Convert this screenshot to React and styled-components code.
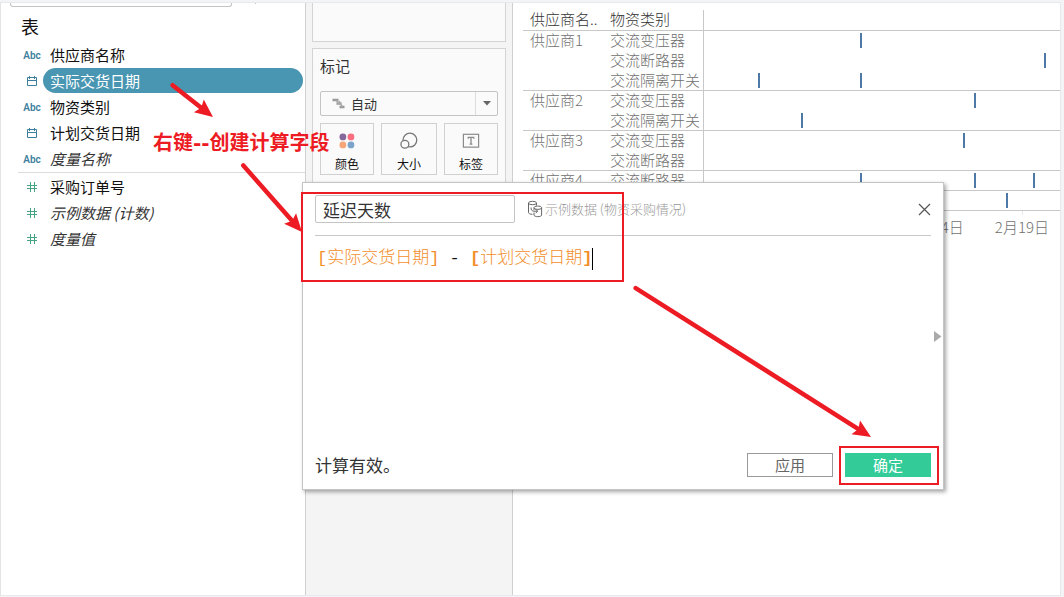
import React from "react";
import styled, { createGlobalStyle, ThemeProvider } from "styled-components";

const theme = {
  colors: {
    dimension: "#4996b2",
    dimensionIcon: "#3d7f9c",
    measure: "#45a583",
    line: "#c8c8c8",
    panel: "#f4f4f4",
    card: "#fafafa",
    mark: "#4e79a7",
    field: "#f28e2b",
    ok: "#33cc99",
    note: "#ed1c24",
  },
  ui: '"Open Sans", "Noto Sans CJK SC", sans-serif',
  cjk: '"Noto Sans CJK SC", sans-serif',
  mono: '"Liberation Mono", "Noto Sans CJK SC", monospace',
};

const GlobalStyle = createGlobalStyle`
  * {
    box-sizing: border-box;
  }
  body {
    margin: 0;
    background-color: #f3f4f6;
    font-family: ${theme.ui};
    color: #111;
  }
  button, input, select {
    font-family: inherit;
    margin: 0;
  }
`;

const Page = styled("div")`
  position: relative;
  min-height: 100vh;
  padding: 2px 3px 1px 0;
  display: flex;
  overflow: hidden;
`;

const Workspace = styled("div")`
  flex: 1;
  display: grid;
  grid-template-columns: 305px 207px minmax(0, 1fr);
  background-color: white;
  border: 1px solid #e8e9ec;
  border-left-color: #e4e4e4;
`;

/* data pane */

const DataPane = styled("aside")`
  border-right: 1px solid #d0d0d0;
`;

const SearchBar = styled("div")`
  display: flex;
  height: 4px;
  padding-left: 9px;
  gap: 23px;
`;

const SearchInput = styled("input")`
  width: 222px;
  height: 4px;
  padding: 0;
  border: 1px solid #c4c4c4;
  border-top: 0;
  border-radius: 0 0 3px 3px;
`;

const SearchDivider = styled("span")`
  width: 1px;
  height: 1px;
  background-color: #c4c4c4;
`;

const PaneTitle = styled("h2")`
  margin: 5px 0 0 20px;
  font-size: 18px;
  line-height: 30px;
  font-weight: 400;
`;

const FieldList = styled("ul")`
  list-style: none;
  margin: 0;
  padding: 0 2px 0 20px;
`;

const PaneDivider = styled("hr")`
  margin: 0 0 1px 17px;
  border: 0;
  border-top: 1px solid #dcdcdc;
`;

const FieldRow = styled("li")`
  display: flex;
  height: 26px;
`;

const FieldIcon = styled("span")`
  width: 22px;
  height: 26px;
  display: flex;
  align-items: center;
  justify-content: center;
  color: ${({ theme, $measure }) =>
    $measure ? theme.colors.measure : theme.colors.dimensionIcon};
  font-family: Roboto, sans-serif;
  font-size: 10px;
  font-weight: 600;
`;

const FieldName = styled("span")`
  flex: 1;
  height: 25px;
  line-height: 25px;
  padding-left: 7px;
  border-radius: 13px;
  font-family: ${({ theme }) => theme.cjk};
  font-size: 15px;
  font-style: ${({ $italic }) => ($italic ? "italic" : "normal")};
  color: ${({ $selected, $italic }) =>
    $selected ? "white" : $italic ? "#333" : "#111"};
  background-color: ${({ theme, $selected }) =>
    $selected ? theme.colors.dimension : "transparent"};
`;

/* cards */

const Shelves = styled("section")`
  display: flex;
  flex-direction: column;
  gap: 6px;
  padding: 0 6px;
  background-color: ${({ theme }) => theme.colors.panel};
  border-right: 1px solid #d0d0d0;
`;

const FilterCard = styled("div")`
  height: 39px;
  border: 1px solid #d4d4d4;
  border-top: 0;
  background-color: ${({ theme }) => theme.colors.card};
`;

const MarksCard = styled("div")`
  height: 270px;
  padding: 3px 7px;
  border: 1px solid #d4d4d4;
  background-color: ${({ theme }) => theme.colors.card};
`;

const CardTitle = styled("h3")`
  margin: 0 0 11px;
  font-size: 15px;
  line-height: 28px;
  font-weight: 400;
  color: #333;
`;

const MarkType = styled("div")`
  display: grid;
  grid-template-columns: 30px 1fr 22px;
  align-items: center;
  height: 25px;
  border: 1px solid #c4c4c4;
  border-radius: 2px;

  > svg {
    grid-row: 1;
    grid-column: 1;
    pointer-events: none;
    z-index: 1;
  }
`;

const MarkSelect = styled("select")`
  grid-row: 1;
  grid-column: 1 / -1;
  appearance: none;
  height: 23px;
  padding: 0 0 0 30px;
  border: 0;
  background: transparent;
  font-size: 13px;
  color: #333;
`;

const MarkArrow = styled("span")`
  grid-row: 1;
  grid-column: 3;
  height: 23px;
  display: flex;
  align-items: center;
  justify-content: center;
  border-left: 1px solid #dcdcdc;
  pointer-events: none;
`;

const MarkButtons = styled("div")`
  display: grid;
  grid-template-columns: 54px 1fr 54px;
  gap: 7px;
  margin-top: 7px;
`;

const MarkButton = styled("button")`
  height: 52px;
  padding: 6px 0 0;
  display: flex;
  flex-direction: column;
  align-items: center;
  gap: 4px;
  border: 1px solid #d0d0d0;
  background-color: ${({ theme }) => theme.colors.card};
  font-size: 12px;
  line-height: 18px;
  color: #111;
`;

/* view */

const View = styled("main")`
  padding: 7px 0 0 10px;
`;

const VizTable = styled("table")`
  width: 100%;
  table-layout: fixed;
  border-spacing: 0;
  font-family: ${({ theme }) => theme.cjk};
  font-size: 15px;
  color: #707070;
`;

const HeadCell = styled("th")`
  width: ${({ $width }) => $width || "auto"};
  height: 21px;
  padding: 0 0 0 7px;
  line-height: 18px;
  vertical-align: top;
  font-weight: 300;
  text-align: left;
  white-space: nowrap;
  color: #333;
  border-bottom: 1px solid ${({ theme }) => theme.colors.line};
`;

const Cell = styled("td")`
  height: 20px;
  padding: 0 0 0 7px;
  line-height: 18px;
  vertical-align: top;
  font-weight: 300;
  white-space: nowrap;
  border-bottom: ${({ theme, $last }) =>
    $last ? `1px solid ${theme.colors.line}` : "0"};
`;

const PlotHead = styled(HeadCell)`
  border-left: 1px solid ${({ theme }) => theme.colors.line};
`;

const PlotCell = styled(Cell)`
  padding: 0;
  border-left: 1px solid ${({ theme }) => theme.colors.line};
`;

const Plot = styled("div")`
  position: relative;
  height: 19px;
`;

const Mark = styled("span")`
  position: absolute;
  top: 2px;
  width: 2px;
  height: 15px;
  background-color: ${({ theme }) => theme.colors.mark};
`;

const AxisCell = styled("td")`
  padding: 0 0 0 1px;
`;

const Axis = styled("div")`
  position: relative;
  height: 32px;
`;

const Tick = styled("span")`
  position: absolute;
  top: 0;
  transform: translateX(-50%);
  padding-top: 5px;
  line-height: 22px;
  font-weight: 300;
  white-space: nowrap;

  &::before {
    content: "";
    position: absolute;
    top: 0;
    left: 50%;
    width: 1px;
    height: 4px;
    background-color: #e8e8e8;
  }
`;

/* calculation editor */

const Dialog = styled("form")`
  position: absolute;
  left: 302px;
  top: 182px;
  width: 642px;
  height: 308px;
  padding: 12px;
  display: flex;
  flex-direction: column;
  background-color: white;
  border: 1px solid #c4c4c4;
  box-shadow: 2px 2px 4px rgba(0, 0, 0, 0.35);
`;

const DialogHeader = styled("header")`
  display: flex;
  align-items: center;
  height: 41px;
  padding-bottom: 12px;
  border-bottom: 1px solid ${({ theme }) => theme.colors.line};
`;

const NameInput = styled("input")`
  width: 200px;
  height: 28px;
  padding: 0 7px;
  border: 1px solid #c4c4c4;
  border-radius: 2px;
  font-size: 17px;
  color: #333;
  outline: 0;
`;

const Source = styled("span")`
  flex: 1;
  display: flex;
  align-items: center;
  gap: 2px;
  margin-left: 12px;
  font-family: ${({ theme }) => theme.cjk};
  font-size: 13px;
  line-height: 20px;
  font-weight: 300;
  color: #999;
`;

const IconButton = styled("button")`
  display: flex;
  padding: 0;
  border: 0;
  background: transparent;
`;

const ExpandButton = styled(IconButton)`
  position: absolute;
  right: 1px;
  top: 148px;
`;

const Formula = styled("div")`
  flex: 1;
  display: flex;
  align-items: flex-start;
  padding: 12px 2px;
  font-family: ${({ theme }) => theme.mono};
  font-size: 17px;
  line-height: 22px;
  white-space: pre;
  color: #111;
  outline: 0;
`;

const FieldRef = styled("span")`
  color: ${({ theme }) => theme.colors.field};
  font-weight: 300;
`;

const Bracket = styled("span")`
  font-weight: ${({ $bold }) => ($bold ? 700 : 400)};
`;

const Caret = styled("span")`
  width: 1px;
  height: 22px;
  background-color: black;
`;

const DialogFooter = styled("footer")`
  display: flex;
  align-items: center;
  gap: 12px;
`;

const Status = styled("p")`
  flex: 1;
  margin: 0;
  padding-top: 2px;
  font-size: 17px;
  line-height: 22px;
  color: #333;
`;

const Button = styled("button")`
  width: 86px;
  height: 24px;
  padding: 0;
  font-size: 15px;
  line-height: 22px;
  color: ${({ $primary }) => ($primary ? "white" : "#666")};
  background-color: ${({ theme, $primary }) =>
    $primary ? theme.colors.ok : "white"};
  border: 1px solid
    ${({ theme, $primary }) => ($primary ? theme.colors.ok : "#999")};
`;

/* notes drawn over the window */

const NoteText = styled("strong")`
  position: absolute;
  left: 153px;
  top: 128px;
  font-family: "DejaVu Sans", "Noto Sans CJK SC", sans-serif;
  font-size: 20px;
  line-height: 30px;
  white-space: nowrap;
  color: ${({ theme }) => theme.colors.note};
`;

const NoteBox = styled("div")`
  position: absolute;
  left: ${({ $x }) => $x}px;
  top: ${({ $y }) => $y}px;
  width: ${({ $w }) => $w}px;
  height: ${({ $h }) => $h}px;
  border: 2px solid ${({ theme }) => theme.colors.note};
  pointer-events: none;
`;

const NoteArrows = styled("svg")`
  position: absolute;
  left: 0;
  top: 0;
  pointer-events: none;
`;

const CalendarIcon = () => (
  <svg width="12" height="12" viewBox="0 0 12 12" fill="none" stroke="currentColor">
    <path d="M1.5 2.5h9v8h-9zM1.5 5.5h9M3.5 1v3M8.5 1v3" />
  </svg>
);

const HashIcon = () => (
  <svg width="12" height="12" viewBox="0 0 12 12" fill="none" stroke="currentColor">
    <path d="M1 4.5h10M1 7.5h10M4.5 1v10M8.5 1v10" />
  </svg>
);

const AutoIcon = () => (
  <svg width="30" height="12" viewBox="0 0 30 12" fill="none" stroke="#999">
    <path d="M11.5 2h6M15.500 5.500h5M18.500 9h5" strokeWidth="2.400" />
    <path d="M15 2l3 4M18 3l3.500 6" stroke="#aaa" strokeWidth="1.500" />
  </svg>
);

const ColorIcon = () => (
  <svg width="24" height="24" viewBox="0 0 24 24">
    <circle cx="7.5" cy="7.5" r="3.7" fill="#85699a" />
    <circle cx="16.3" cy="7.5" r="3.7" fill="#fa6e80" />
    <circle cx="7.5" cy="16.3" r="3.7" fill="#f5a577" />
    <circle cx="16.3" cy="16.3" r="3.7" fill="#7ba3cb" />
  </svg>
);

const SizeIcon = () => (
  <svg width="24" height="24" viewBox="0 0 24 24" fill="none" stroke="#777" strokeWidth="1.4">
    <circle cx="13" cy="11" r="7.5" />
    <circle cx="7.5" cy="15.5" r="4.3" fill="#fafafa" />
  </svg>
);

const LabelIcon = () => (
  <svg width="24" height="24" viewBox="0 0 24 24" fill="none" stroke="#8a8a8a">
    <rect x="3.7" y="4.7" width="16.6" height="14" strokeWidth="1.3" />
    <path d="M9 9.500V8h6v1.500M12 8v7.500M10.500 15.500h3" strokeWidth="1.4" />
  </svg>
);

const SourceIcon = () => (
  <svg width="16" height="18" viewBox="0 0 16 18" fill="none" stroke="#666">
    <ellipse cx="5.5" cy="3" rx="4" ry="1.700" />
    <path d="M1.500 3v9.500c0 1 1.500 1.800 4 1.800M9.500 3v2.500" />
    <ellipse cx="10.800" cy="7.700" rx="3.800" ry="1.700" />
    <path d="M7 7.700v2.300M7 12.500v2.500c0 2.200 7.600 2.200 7.600 0V7.700" />
    <path d="M4 7.500c0 2.500 1 3.700 3 3.700h3.500M8.700 9.200l2 2-2 2" />
  </svg>
);

const CloseIcon = () => (
  <svg width="13" height="13" viewBox="0 0 13 13" stroke="#555" strokeWidth="1.2">
    <path d="M1 1l11 11M12 1L1 12" />
  </svg>
);

const Arrow = ({ from, to }) => {
  const [x1, y1] = from;
  const [x2, y2] = to;
  const length = Math.hypot(x2 - x1, y2 - y1);
  const angle = (Math.atan2(y2 - y1, x2 - x1) * 180) / Math.PI;
  return (
    <g transform={`translate(${x1} ${y1}) rotate(${angle})`}>
      <path d={`M2 0H${length - 13}`} stroke="#ed1c24" strokeWidth="4.5" strokeLinecap="round" />
      <path
        d={`M${length} 0L${length - 18} -8L${length - 15} 0L${length - 18} 8Z`}
        fill="#ed1c24"
      />
    </g>
  );
};

const dimensions = [
  { name: "供应商名称", type: "text" },
  { name: "实际交货日期", type: "date", selected: true },
  { name: "物资类别", type: "text" },
  { name: "计划交货日期", type: "date" },
  { name: "度量名称", type: "text", italic: true },
];

const measures = [
  { name: "采购订单号", type: "number" },
  { name: "示例数据 (计数)", type: "number", italic: true },
  { name: "度量值", type: "number", italic: true },
];

// marks are given in percent of the date axis
const rows = [
  { supplier: "供应商1", category: "交流变压器", marks: [43.8] },
  { category: "交流断路器", marks: [95.5] },
  { category: "交流隔离开关", marks: [15.2, 43.8], last: true },
  { supplier: "供应商2", category: "交流变压器", marks: [75.8] },
  { category: "交流隔离开关", marks: [27.3], last: true },
  { supplier: "供应商3", category: "交流变压器", marks: [72.8] },
  { category: "交流断路器", marks: [], last: true },
  { supplier: "供应商4", category: "交流断路器", marks: [43.8, 75.8, 92.4], last: true },
  { marks: [84.8], last: true },
];

const ticks = [
  { label: "2月4日", at: 66.5 },
  { label: "2月19日", at: 89.3 },
];

const icons = {
  text: "Abc",
  date: <CalendarIcon />,
  number: <HashIcon />,
};

const Fields = ({ items }) => (
  <FieldList>
    {items.map((f) => (
      <FieldRow key={f.name}>
        <FieldIcon $measure={f.type === "number"}>{icons[f.type]}</FieldIcon>
        <FieldName $selected={f.selected} $italic={f.italic}>
          {f.name}
        </FieldName>
      </FieldRow>
    ))}
  </FieldList>
);

const Viz = () => (
  <VizTable>
    <thead>
      <tr>
        <HeadCell $width="80px">供应商名..</HeadCell>
        <HeadCell $width="100px">物资类别</HeadCell>
        <PlotHead />
      </tr>
    </thead>
    <tbody>
      {rows.map((r, i) => (
        <tr key={i}>
          <Cell $last={r.last}>{r.supplier}</Cell>
          <Cell $last={r.last}>{r.category}</Cell>
          <PlotCell $last={r.last}>
            <Plot>
              {r.marks.map((m) => (
                <Mark key={m} style={{ left: `${m}%` }} />
              ))}
            </Plot>
          </PlotCell>
        </tr>
      ))}
    </tbody>
    <tfoot>
      <tr>
        <td colSpan={2} />
        <AxisCell>
          <Axis>
            {ticks.map((t) => (
              <Tick key={t.label} style={{ left: `${t.at}%` }}>
                {t.label}
              </Tick>
            ))}
          </Axis>
        </AxisCell>
      </tr>
    </tfoot>
  </VizTable>
);

const CalculationEditor = () => {
  const [name, setName] = React.useState("延迟天数");

  return (
    <Dialog onSubmit={(e) => e.preventDefault()}>
      <DialogHeader>
        <NameInput
          aria-label="名称"
          value={name}
          onChange={(e) => setName(e.target.value)}
        />
        <Source>
          <SourceIcon />
          示例数据 (物资采购情况)
        </Source>
        <IconButton type="button" aria-label="关闭">
          <CloseIcon />
        </IconButton>
      </DialogHeader>
      <Formula role="textbox" aria-label="公式" tabIndex={0}>
        <FieldRef>
          <Bracket>[</Bracket>实际交货日期<Bracket>]</Bracket>
        </FieldRef>
        {" - "}
        <FieldRef>
          <Bracket $bold>[</Bracket>计划交货日期<Bracket $bold>]</Bracket>
        </FieldRef>
        <Caret />
      </Formula>
      <ExpandButton type="button" aria-label="展开">
        <svg width="8" height="11" viewBox="0 0 8 11">
          <path d="M0 0l7.5 5.5L0 11z" fill="#aaa" />
        </svg>
      </ExpandButton>
      <DialogFooter>
        <Status>计算有效。</Status>
        <Button type="button">应用</Button>
        <Button type="submit" $primary>
          确定
        </Button>
      </DialogFooter>
    </Dialog>
  );
};

export default function App() {
  return (
    <ThemeProvider theme={theme}>
      <GlobalStyle />
      <Page>
        <Workspace>
          <DataPane>
            <SearchBar>
              <SearchInput aria-label="搜索" />
              <SearchDivider />
            </SearchBar>
            <PaneTitle>表</PaneTitle>
            <Fields items={dimensions} />
            <PaneDivider />
            <Fields items={measures} />
          </DataPane>
          <Shelves>
            <FilterCard />
            <MarksCard>
              <CardTitle>标记</CardTitle>
              <MarkType>
                <AutoIcon />
                <MarkSelect aria-label="标记类型">
                  <option>自动</option>
                </MarkSelect>
                <MarkArrow>
                  <svg width="8" height="5" viewBox="0 0 8 5">
                    <path d="M0 0h8L4 4.5z" fill="#666" />
                  </svg>
                </MarkArrow>
              </MarkType>
              <MarkButtons>
                <MarkButton>
                  <ColorIcon />
                  颜色
                </MarkButton>
                <MarkButton>
                  <SizeIcon />
                  大小
                </MarkButton>
                <MarkButton>
                  <LabelIcon />
                  标签
                </MarkButton>
              </MarkButtons>
            </MarksCard>
          </Shelves>
          <View>
            <Viz />
          </View>
        </Workspace>
        <CalculationEditor />
        <NoteText>右键--创建计算字段</NoteText>
        <NoteBox $x={301} $y={192} $w={323} $h={90} />
        <NoteBox $x={839} $y={446} $w={100} $h={39} />
        <NoteArrows width="1064" height="597">
          <Arrow from={[171, 84]} to={[213, 117]} />
          <Arrow from={[242, 164]} to={[302, 232]} />
          <Arrow from={[634, 287]} to={[871, 437]} />
        </NoteArrows>
      </Page>
    </ThemeProvider>
  );
}
